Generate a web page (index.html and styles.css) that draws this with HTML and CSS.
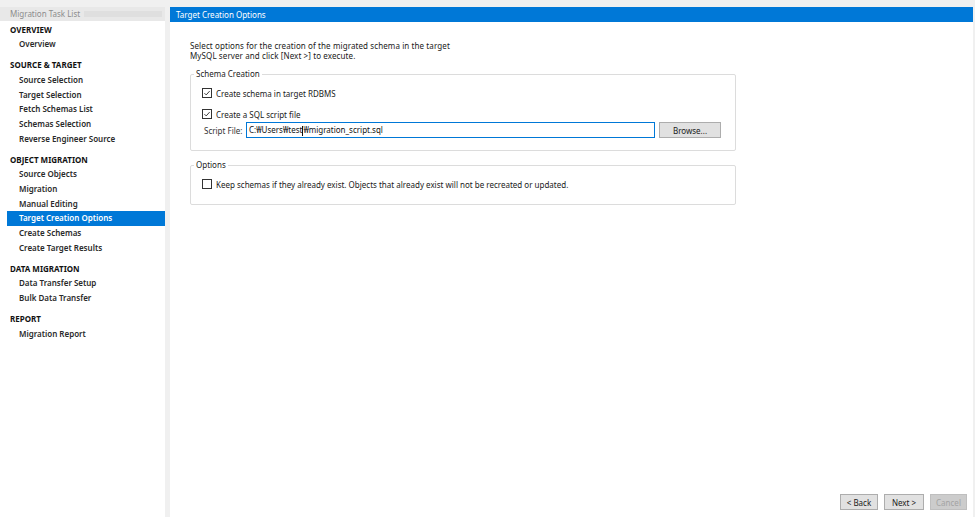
FILE: index.html
```html
<!DOCTYPE html>
<html lang="en">
<head>
    <meta charset="UTF-8">
    <title>Migration Wizard</title>
    <link rel="stylesheet" href="styles.css">
</head>
<body>
    <div class="window">
        <div class="sidebar">
            <div class="sidebar-title">
                <span>Migration Task List</span>
                <span class="grip"></span>
            </div>
            <div class="task-list">
                <div class="section">
                    <div class="section-head">OVERVIEW</div>
                    <div class="task">Overview</div>
                </div>
                <div class="section">
                    <div class="section-head">SOURCE &amp; TARGET</div>
                    <div class="task">Source Selection</div>
                    <div class="task">Target Selection</div>
                    <div class="task">Fetch Schemas List</div>
                    <div class="task">Schemas Selection</div>
                    <div class="task">Reverse Engineer Source</div>
                </div>
                <div class="section">
                    <div class="section-head">OBJECT MIGRATION</div>
                    <div class="task">Source Objects</div>
                    <div class="task">Migration</div>
                    <div class="task">Manual Editing</div>
                    <div class="task active">Target Creation Options</div>
                    <div class="task">Create Schemas</div>
                    <div class="task">Create Target Results</div>
                </div>
                <div class="section">
                    <div class="section-head">DATA MIGRATION</div>
                    <div class="task">Data Transfer Setup</div>
                    <div class="task">Bulk Data Transfer</div>
                </div>
                <div class="section">
                    <div class="section-head">REPORT</div>
                    <div class="task">Migration Report</div>
                </div>
            </div>
        </div>

        <div class="main">
            <div class="main-title">Target Creation Options</div>
            <div class="content">
                <p class="intro">Select options for the creation of the migrated schema in the target<br>MySQL server and click [Next &gt;] to execute.</p>

                <fieldset class="group">
                    <legend>Schema Creation</legend>
                    <div class="group-body">
                        <label class="check-row">
                            <span class="checkbox checked"><svg viewBox="0 0 10 10"><path d="M1.8 5.2 L4 7.4 L8.3 2.6" fill="none" stroke="#222" stroke-width="1.1"/></svg></span>
                            Create schema in target RDBMS
                        </label>
                        <label class="check-row second">
                            <span class="checkbox checked"><svg viewBox="0 0 10 10"><path d="M1.8 5.2 L4 7.4 L8.3 2.6" fill="none" stroke="#222" stroke-width="1.1"/></svg></span>
                            Create a SQL script file
                        </label>
                        <div class="file-row">
                            <span class="file-label">Script File:</span>
                            <div class="file-input">C:₩Users₩test<span class="caret"></span>₩migration_script.sql</div>
                            <button class="btn browse">Browse...</button>
                        </div>
                    </div>
                </fieldset>

                <fieldset class="group options">
                    <legend>Options</legend>
                    <div class="group-body">
                        <label class="check-row">
                            <span class="checkbox"></span>
                            Keep schemas if they already exist. Objects that already exist will not be recreated or updated.
                        </label>
                    </div>
                </fieldset>
            </div>

            <div class="footer">
                <button class="btn nav back">&lt; Back</button>
                <button class="btn nav next">Next &gt;</button>
                <button class="btn nav" disabled>Cancel</button>
            </div>
        </div>
    </div>
</body>
</html>
```

FILE: styles.css
```css
html, body {
    margin: 0;
    padding: 0;
}

body {
    width: 975px;
    height: 517px;
    overflow: hidden;
    background: #f0f0f0;
    font-family: "Noto Sans", "Noto Sans CJK KR", sans-serif;
    font-size: 8px;
    color: #1a1a1a;
}

.window {
    display: flex;
    gap: 5px;
    height: 517px;
    padding: 7px 2px 0 0;
    box-sizing: border-box;
}

/* left task list */

.sidebar {
    width: 165px;
    background: #fff;
    display: flex;
    flex-direction: column;
}

.sidebar-title {
    height: 14px;
    line-height: 14px;
    background: #e8e8e8;
    color: #8c8c8c;
    padding-left: 10px;
    display: flex;
    align-items: center;
    gap: 4px;
}

.grip {
    flex: 1;
    height: 6px;
    margin-right: 3px;
    background-image: radial-gradient(circle, #d6d6d6 0.5px, transparent 0.9px);
    background-size: 2px 2px;
}

.task-list {
    padding-top: 1.5px;
}

.section + .section {
    margin-top: 6.3px;
}

.section-head,
.task {
    height: 14.7px;
    line-height: 14.7px;
    white-space: nowrap;
}

.section-head {
    padding-left: 10px;
    font-weight: 700;
    color: #111;
}

.task {
    padding-left: 19px;
    font-weight: 600;
    color: #2a2a2a;
}

.task.active {
    margin-left: 7px;
    padding-left: 12px;
    background: #0078d7;
    color: #fff;
}

/* main page */

.main {
    flex: 1;
    background: #fff;
    display: flex;
    flex-direction: column;
}

.main-title {
    height: 15px;
    line-height: 15px;
    background: #0078d7;
    color: #fff;
    padding-left: 6px;
}

.content {
    padding: 19px 0 0 20px;
}

.intro {
    margin: 0;
    line-height: 10px;
    letter-spacing: 0.1px;
}

.group {
    width: 546px;
    box-sizing: border-box;
    margin: 8px 0 0 0;
    padding: 0;
    border: 1px solid #dcdcdc;
    border-radius: 2px;
}

.group legend {
    margin-left: 3px;
    padding: 0 2px;
    line-height: 10px;
    color: #222;
}

.group-body {
    padding: 7px 0 12px 11px;
}

.options {
    margin-top: 9px;
}

.options .group-body {
    padding-bottom: 13px;
}

.check-row {
    display: flex;
    align-items: center;
    gap: 4px;
    height: 14px;
}

.check-row.second {
    margin-top: 7px;
}

.checkbox {
    width: 10px;
    height: 10px;
    box-sizing: border-box;
    border: 1px solid #333;
    background: #fff;
    display: inline-flex;
}

.checkbox svg {
    width: 8px;
    height: 8px;
}

.file-row {
    display: flex;
    align-items: center;
    margin-top: 1px;
    padding-left: 2px;
}

.file-label {
    width: 42px;
    color: #333;
}

.file-input {
    width: 409px;
    height: 16px;
    line-height: 14px;
    box-sizing: border-box;
    border: 1px solid #0078d7;
    padding-left: 2px;
    color: #111;
}

.caret {
    display: inline-block;
    width: 0;
    height: 10px;
    border-left: 1px solid #111;
    vertical-align: middle;
}

.btn {
    font-family: inherit;
    font-size: 8px;
    height: 16px;
    padding: 0;
    background: #e1e1e1;
    border: 1px solid #adadad;
    color: #1a1a1a;
}

.browse {
    width: 62px;
    margin-left: 4px;
}

.footer {
    margin-top: auto;
    display: flex;
    justify-content: flex-end;
    gap: 6px;
    padding: 0 6px 7px 0;
}

.nav {
    width: 37px;
}

.nav.back {
    width: 38px;
}

.nav.next {
    width: 40px;
}

.nav:disabled {
    background: #cccccc;
    border-color: #bfbfbf;
    color: #a3a3a3;
}
```
